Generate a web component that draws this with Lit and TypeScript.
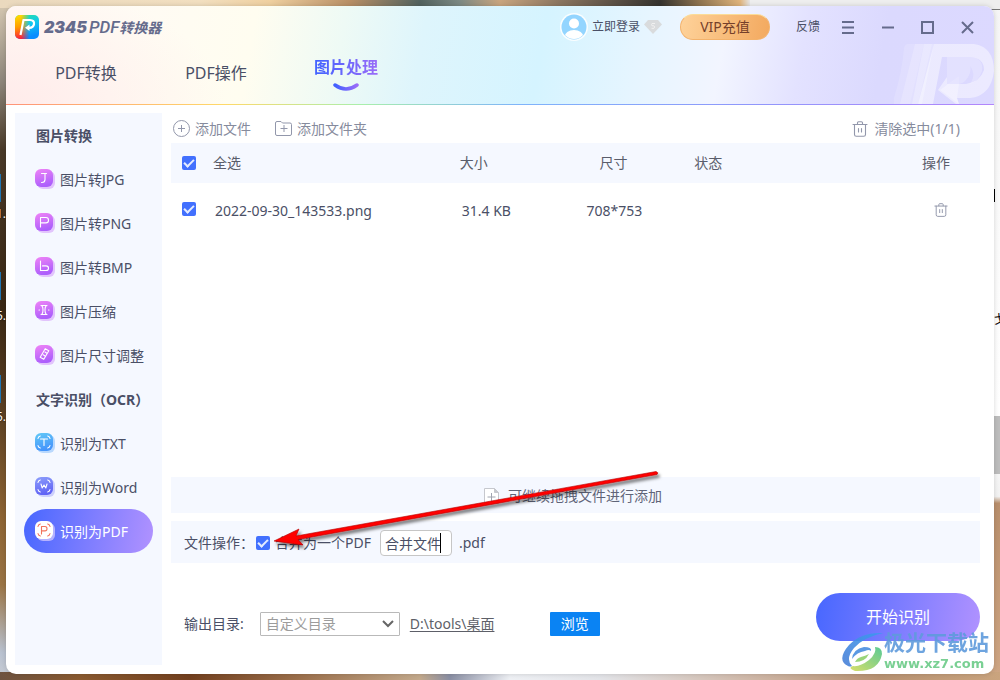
import { LitElement, html, css, svg } from "lit";
import { customElement, property, state } from "lit/decorators.js";
import { classMap } from "lit/directives/class-map.js";

type Glyph = "jpg" | "png" | "bmp" | "compress" | "resize" | "txt" | "word" | "pdf";

const glyphs: Record<Glyph, unknown> = {
  jpg: svg`<path d="M6.500 4.500h5M10 4.500v6q0 3-3 3h-.5"/>`,
  png: svg`<path d="M5.500 14V4.500h5.500q2.500 0 2.500 2.700t-2.500 2.700H5.500"/>`,
  bmp: svg`<path d="M5.500 4v9.500h5.500q2.500 0 2.500-2.300t-2.500-2.300H7.500"/>`,
  compress: svg`<path d="M6 4.500h6M6 13.500h6M7 5q1 1 1 4t-1 4M11 5q-1 1-1 4t1 4M4 9h.5M13.500 9h.5"/>`,
  resize: svg`<path d="M10.200 3.700l3.600 2.100-5 8.500-3.600-2.100zM10 7l1.500 1M8.200 9.800l1.500 1"/>`,
  txt: svg`<path d="M5.500 6h7M9 6v6.500"/>`,
  word: svg`<path d="M6 7l1.200 4L9 8l1.800 3L12 7"/>`,
  pdf: svg`<path d="M6.500 13V5.500h3.500q2 0 2 2.200t-2 2.200H6.500"/>`,
};

const corners = svg`<path d="M3 5.500q.3-2 2.300-2.500M12.700 3q2 .5 2.300 2.500M15 12.500q-.3 2-2.300 2.500M5.300 15q-2-.5-2.300-2.500"/>`;

@customElement("nav-icon")
class NavIcon extends LitElement {
  @property() name: Glyph = "jpg";

  static styles = css`
    :host { display: block; width: 20px; height: 20px; }
    svg { display: block; }
  `;

  render() {
    const tones: Record<string, string[]> = {
      txt: ["#62c9f7", "#4595fb", "#fff", "#b9d8fd"],
      word: ["#8d9ffb", "#6164f5", "#fff", "#cdd0fc"],
      pdf: ["#fff", "#fff", "#f2735c", "#b5b2ff"],
    };
    const [from, to, stroke, shade] = tones[this.name] ?? ["#f084f6", "#ad5ffc", "#fff", "#e2c4fc"];
    return html`<svg width="20" height="20" viewBox="0 0 20 20" fill="none" aria-hidden="true">
      <defs><linearGradient id="g" x1="0" y1="0" x2="0.3" y2="1">
        <stop stop-color=${from} /><stop offset="1" stop-color=${to} />
      </linearGradient></defs>
      <rect x="2" y="2" width="18" height="18" rx="6" fill=${shade} />
      <rect width="18" height="18" rx="6" fill="url(#g)" />
      <g stroke=${stroke} stroke-width="1.1" stroke-linecap="round" stroke-linejoin="round">
        ${glyphs[this.name]}
        ${this.name in tones ? corners : ""}
      </g>
    </svg>`;
  }
}

const trash = (size: number) => html`<svg width=${size} height=${size} viewBox="0 0 16 16" fill="none" stroke="#9297ab" stroke-width="1.1" stroke-linecap="round" aria-hidden="true">
  <path d="M1 3.500h14M5.500 3.200V1.800q0-1 1-1h3q1 0 1 1v1.400M2.500 3.500v10q0 1.800 1.800 1.800h7.400q1.800 0 1.800-1.800v-10M6.500 7.500v3.500M9.500 7.500v3.500"/>
</svg>`;

interface NavGroup {
  title: string;
  items: { icon: Glyph; label: string }[];
}

const groups: NavGroup[] = [
  {
    title: "图片转换",
    items: [
      { icon: "jpg", label: "图片转JPG" },
      { icon: "png", label: "图片转PNG" },
      { icon: "bmp", label: "图片转BMP" },
      { icon: "compress", label: "图片压缩" },
      { icon: "resize", label: "图片尺寸调整" },
    ],
  },
  {
    title: "文字识别（OCR）",
    items: [
      { icon: "txt", label: "识别为TXT" },
      { icon: "word", label: "识别为Word" },
      { icon: "pdf", label: "识别为PDF" },
    ],
  },
];

const tabs = ["PDF转换", "PDF操作", "图片处理"];
const files = [{ name: "2022-09-30_143533.png", size: "31.4 KB", dims: "708*753" }];

@customElement("app-root")
class AppRoot extends LitElement {
  @state() private tab = "图片处理";
  @state() private tool = "识别为PDF";

  static styles = css`
    :host {
      display: block;
      position: relative;
      box-sizing: border-box;
      min-height: 100vh;
      padding: 6px;
      overflow: hidden;
      font: 14px/20px "Noto Sans", "Noto Sans CJK SC", sans-serif;
      color: #4a4f66;
    }
    * { box-sizing: border-box; }
    button, input, select { font: inherit; color: inherit; margin: 0; }
    button { padding: 0; border: 0; background: none; cursor: pointer; }
    svg { display: block; flex: none; }

    .desktop {
      position: absolute;
      inset: 0;
      overflow: hidden;
      background:
        linear-gradient(90deg, #ead9be 0, #f2dfc0 20%, #efd0a0 27%, #b88f66 35%, #52625f 42%, #7d8a84 46%, #c9a57f 50%, #8a7560 56%, #35332f 66%, #8f7450 70%, #e0b47c 74%, #e5e5e5 75%) top / 100% 8px no-repeat,
        linear-gradient(90deg, #6e5340 0, #8a5a30 8%, #73401f 19%, #9c704c 30%, #c3a98c 42%, #8a8fa4 45%, #eef0f4 51%, #e3e4e8 60%, #cfb8a8 75%, #b89272 88%, #caa47e 100%) bottom / 100% 8px no-repeat,
        linear-gradient(180deg, #d9cbb4 0, #8d857a 12%, #4a3a28 22%, #3a2814 45%, #5a3f22 60%, #8d6433 76%, #9a7444 86%, #b9c2d0 96%, #c8ccd4 100%) left / 50% 100% no-repeat,
        linear-gradient(180deg, #f5f5f5 0, #fff 60%, #f2f2f2 73%, #b98f6c 74%, #cfa684 100%) right / 50% 100% no-repeat;
    }
    .shard { position: absolute; left: 0; width: 1px; height: 28px; background: #1f74b0; }
    .tag { position: absolute; right: 994px; color: #fff; font-size: 12px; line-height: 16px; text-shadow: 0 0 2px #000; white-space: nowrap; }
    .s1 { top: 174px; }
    .s2 { top: 272px; }
    .s3 { top: 375px; }
    .t1 { top: 206px; }
    .t2 { top: 308px; }
    .t3 { top: 409px; }
    .bar { position: absolute; right: 0; top: 0; width: 25%; height: 10px; background: #eee; border-bottom: 1px solid #777; }
    .panel { position: absolute; right: 0; top: 416px; width: 6px; height: 58px; background: #bdbdbd; }
    .stroke { position: absolute; right: 5px; top: 189px; width: 1px; height: 13px; background: #000; }
    .stray { position: absolute; left: 994px; top: 312px; color: #000; font-size: 12px; line-height: 16px; }

    .window {
      position: relative;
      display: flex;
      flex-direction: column;
      min-height: calc(100vh - 12px);
      border-radius: 10px;
      background: #fff;
      box-shadow: 0 0 5px rgba(0, 0, 0, 0.16);
    }

    .head {
      position: relative;
      border-radius: 10px 10px 0 0;
      background:
        linear-gradient(90deg, #ff9379, #ffd969 22%, #a9efac 36%, #7fb4fa 52%, #8f97fb 75%, #b286fb) bottom / 100% 1px no-repeat,
        radial-gradient(ellipse 220px 120px at 0 100%, rgba(255, 232, 232, 0.8), rgba(255, 240, 240, 0)),
        linear-gradient(100deg, #fff8f4 0, #fffbf4 12%, #fffdf0 25%, #eefaf5 34%, #def5fc 42%, #d5f4ff 54%, #e6f5ff 64%, #f2f5ff 72%, #e3e2ff 80%, #dbd9fe 88%, #dcd9ff 100%);
    }
    .ghost { position: absolute; right: 0; bottom: 1px; }
    .titlebar { position: relative; display: flex; align-items: center; height: 42px; padding: 0 20px 0 9px; font-size: 12px; }
    .brand { display: flex; align-items: center; gap: 5px; margin: 0; color: #656b8c; font-size: 16px; font-weight: 700; font-style: italic; }
    .digits { font-family: "Inter", sans-serif; font-weight: 900; font-size: 16px; }
    .latin { font-family: "Roboto", sans-serif; font-weight: 500; font-size: 17px; margin-left: 2px; }
    .cjk { font-size: 14px; }
    .actions { display: flex; align-items: center; margin-left: auto; }
    .login { display: flex; align-items: center; gap: 4px; font-size: 12px; }
    .vip {
      width: 90px; height: 26px; margin: 0 26px 0 18px;
      border: 1px solid #f3b26b; border-top-color: #fbdc98; border-radius: 13px;
      background: linear-gradient(100deg, #fed29a, #f3a95f);
      color: #75402a; font-size: 14px; line-height: 24px;
    }
    .controls { display: flex; gap: 27px; margin-left: 22px; }

    .tabs { display: flex; height: 57px; padding-left: 15px; }
    .tab { display: flex; flex-direction: column; align-items: center; width: 130px; padding-top: 13px; font-size: 16px; line-height: 24px; }
    .tab.on { padding-top: 7px; font-weight: 700; }
    .tab.on .word { background: linear-gradient(90deg, #3f62ff, #9a6cf8); -webkit-background-clip: text; background-clip: text; color: transparent; }
    .smile { margin-top: 4px; }

    .body { display: flex; flex: 1; gap: 9px; padding: 8px 14px 9px 9px; }
    .side { flex: none; width: 147px; padding: 0 9px; background: #f5f8ff; }
    .group { margin: 0; padding: 2px 0 0 12px; font-size: 14px; font-weight: 700; line-height: 42px; white-space: nowrap; }
    .item {
      display: flex; align-items: center; gap: 5px; width: 100%; height: 44px; padding: 0 0 0 11px;
      border-radius: 22px; text-align: left; white-space: nowrap;
    }
    .item-label { padding-top: 2px; }
    .item.on { background: linear-gradient(100deg, #4767ff, #b192ff); color: #fff; }

    .main { display: flex; flex: 1; flex-direction: column; min-width: 0; padding-bottom: 24px; }
    .tools { display: flex; gap: 24px; height: 30px; padding: 1px 20px 0 2px; color: #868b9d; }
    .tool { display: flex; align-items: center; gap: 5px; }
    .tool.clear { gap: 6px; margin-left: auto; }

    .list { flex: 1; }
    .files { width: 100%; border-collapse: collapse; table-layout: fixed; }
    .files th { height: 40px; padding: 0; background: #f5f8ff; font-weight: 400; text-align: left; color: #5a5d6b; }
    .files td { height: 56px; padding: 0 0 0 2px; }
    .files .c-check { width: 42px; padding-left: 11px; }
    .files td.c-check, .files td.end { padding-bottom: 4px; }
    .c-name { width: 30.5%; }
    .c-size { width: 9%; }
    .c-dims { width: 20%; }
    .c-status { width: 18%; }
    .files .mid { text-align: center; }
    .files .end { padding-right: 30px; text-align: right; }
    .files td.end { padding-right: 32px; }
    .row-action { display: inline-block; vertical-align: middle; }

    .tick { appearance: none; display: grid; place-items: center; flex: none; width: 14px; height: 14px; border-radius: 2px; background: #4270fe; }
    .tick:not(:checked) { background: #fff; border: 1px solid #b5b8c8; }
    .tick:checked::after { content: ""; width: 8px; height: 4px; margin-bottom: 3px; border: solid #e4ebff; border-width: 0 0 2px 2px; transform: rotate(-45deg); }

    .drop { display: flex; align-items: center; justify-content: center; gap: 9px; height: 36px; margin-bottom: 8px; padding: 2px 5px 0 0; background: #f5f8ff; color: #5f6478; }
    .ops { position: relative; display: flex; align-items: center; height: 42px; margin-bottom: 30px; padding: 2px 13px 0; background: #f5f8ff; }
    .ops .tick { margin: 0 5px 0 2px; }
    .field { position: relative; margin: 0 7px 0 9px; }
    .field-input { display: block; width: 72px; height: 26px; padding: 0 4px; border: 1px solid #c6c6c6; border-radius: 4px; background: #fff; outline: 0; }
    .caret { position: absolute; left: 60px; top: 3px; width: 1px; height: 20px; background: #000; }
    .arrow { position: absolute; left: 98px; top: -56px; pointer-events: none; }

    .foot { display: flex; align-items: center; height: 48px; padding-left: 13px; }
    .foot-row { display: flex; align-items: center; flex: 1; padding-top: 14px; }
    .picker { position: relative; margin: 0 10px 0 16px; }
    .picker-select { appearance: none; display: block; width: 140px; height: 24px; padding: 0 24px 0 5px; border: 1px solid #b9b9b9; border-radius: 1px; background: #fff; color: #9c9c9c; }
    .chev { position: absolute; right: 6px; top: 8px; pointer-events: none; }
    .path { width: 140px; color: #5d5f68; text-underline-offset: 2px; }
    .browse { width: 50px; height: 24px; border-radius: 1px; background: #0a83f3; color: #fff; }
    .start { width: 164px; height: 48px; border-radius: 24px; background: linear-gradient(100deg, #4767ff, #b192ff); color: #fff; font-size: 16px; }

    .mark { position: absolute; right: 5px; bottom: 0; display: flex; align-items: center; gap: 1px; pointer-events: none; opacity: 0.9; }
    .mark-name { display: block; color: #5f9bdc; font-size: 21px; font-weight: 700; line-height: 24px; }
    .mark-url { display: block; color: #6ccb88; font: 700 13px/20px "DejaVu Sans", sans-serif; }
  `;

  private logo() {
    return html`<svg width="24" height="24" viewBox="0 0 24 24" aria-hidden="true">
      <defs>
        <linearGradient id="la" x1="0" y1="0" x2="0.2" y2="1"><stop stop-color="#ffe000" /><stop offset=".5" stop-color="#ff9d00" /><stop offset="1" stop-color="#ff1b3c" /></linearGradient>
        <linearGradient id="lb" x1="0" y1="0" x2="0.3" y2="1"><stop stop-color="#2de39b" /><stop offset=".5" stop-color="#10c8ee" /><stop offset="1" stop-color="#0a8dff" /></linearGradient>
        <linearGradient id="lc" x1="0" y1="0" x2="1" y2="0"><stop offset=".25" stop-color="#fff" /><stop offset=".6" stop-color="#000" /></linearGradient>
        <mask id="lm"><rect width="24" height="24" fill="url(#lc)" /></mask>
      </defs>
      <rect width="24" height="24" rx="5" fill="url(#lb)" />
      <rect width="24" height="24" rx="5" fill="url(#la)" mask="url(#lm)" />
      <path d="M5.500 20L8.500 5H15Q19.500 5.200 19 9Q18.500 12.800 14 12.800" fill="none" stroke="#fff" stroke-width="2.200" />
      <path d="M10 12.800L14.500 9.500V16Z" fill="#fff" />
    </svg>`;
  }

  private ghost() {
    return html`<svg class="ghost" width="100" height="60" viewBox="0 0 100 60" fill="#fff" aria-hidden="true">
      <path opacity=".14" d="M14 0H30L16 60H-2Q8 30 10 4Q11 0 14 0z" />
      <path opacity=".2" d="M21 0H38L24 60H6z" />
      <path opacity=".26" d="M30 0H40L28 60H18z" />
      <path opacity=".45" fill-rule="evenodd" d="M40 0H80Q100 3 100 27Q97 52 76 54H63L65 60H62L44 46L53 33V40H72Q86 38 90 26Q90 14 76 13H48L39 60H24z" />
      <path opacity=".22" d="M53 13H66Q79 17 76 29Q72 39 65 40V32L53 41zM66 13H76Q90 14 88 27Q84 38 76 40Q86 26 66 13z" />
      <path opacity=".3" d="M65 32V40L63 54L65 60L46 46z" />
    </svg>`;
  }

  render() {
    return html`
      <div class="desktop" aria-hidden="true">
        <i class="bar"></i><i class="panel"></i><i class="stroke"></i>
        <i class="shard s1"></i><i class="shard s2"></i><i class="shard s3"></i>
        <span class="tag t1">1.</span><span class="tag t2">5.</span><span class="tag t3">5.</span>
        <span class="stray">戈</span>
      </div>
      <div class="window">
        <header class="head">
          ${this.ghost()}
          <div class="titlebar">
            <h1 class="brand">${this.logo()}<span><span class="digits">2345</span><span class="latin">PDF</span><span class="cjk">转换器</span></span></h1>
            <div class="actions">
              <button class="login">
                <svg width="28" height="28" viewBox="0 0 28 28" aria-hidden="true">
                  <defs><clipPath id="av"><circle cx="14" cy="14" r="12" /></clipPath></defs>
                  <circle cx="14" cy="14" r="14" fill="#fff" opacity=".85" />
                  <circle cx="14" cy="14" r="12.500" fill="#93d5ff" />
                  <g fill="#fff" clip-path="url(#av)"><circle cx="14" cy="10.500" r="5" /><ellipse cx="14" cy="24" rx="9.500" ry="7" /></g>
                </svg>
                <span>立即登录</span>
                <svg width="18" height="14" viewBox="0 0 18 14" aria-hidden="true">
                  <path d="M4 0h10l4 4.500L9 14 0 4.500z" fill="#d9dbdd" />
                  <path d="M11 3.500H8q-1 1.300 0 2.300h2q1.300 1.200 0 2.500h-2.500" fill="none" stroke="#f0f0f0" stroke-width="1" />
                </svg>
              </button>
              <button class="vip">VIP充值</button>
              <button>反馈</button>
              <div class="controls">
                <button aria-label="菜单"><svg width="13" height="13" viewBox="0 0 13 13" stroke="#656b8c" stroke-width="2"><path d="M0 1h12M0 6.500h12M0 12h12" /></svg></button>
                <button aria-label="最小化"><svg width="12" height="13" viewBox="0 0 12 13" stroke="#656b8c" stroke-width="2"><path d="M0 6.500h12" /></svg></button>
                <button aria-label="最大化"><svg width="13" height="13" viewBox="0 0 13 13" fill="none" stroke="#656b8c" stroke-width="2"><path d="M1 1h11v11H1z" /></svg></button>
                <button aria-label="关闭"><svg width="13" height="13" viewBox="0 0 13 13" stroke="#656b8c" stroke-width="2"><path d="M1 1l11 11M12 1L1 12" /></svg></button>
              </div>
            </div>
          </div>
          <nav class="tabs">
            ${tabs.map((t) => html`<button class=${classMap({ tab: true, on: t === this.tab })} @click=${() => (this.tab = t)}>
              <span class="word">${t}</span>
              ${t === this.tab
                ? html`<svg class="smile" width="28" height="9" viewBox="0 0 28 9" fill="none" aria-hidden="true">
                    <defs><linearGradient id="sm"><stop stop-color="#4060ff" /><stop offset="1" stop-color="#9a6cf8" /></linearGradient></defs>
                    <path d="M3 2q11 8 22 0" stroke="url(#sm)" stroke-width="3.500" stroke-linecap="round" /></svg>`
                : ""}
            </button>`)}
          </nav>
        </header>

        <div class="body">
          <aside class="side">
            ${groups.map((g) => html`
              <h2 class="group">${g.title}</h2>
              ${g.items.map((i) => html`<button class=${classMap({ item: true, on: i.label === this.tool })} @click=${() => (this.tool = i.label)}>
                <nav-icon name=${i.icon}></nav-icon><span class="item-label">${i.label}</span>
              </button>`)}
            `)}
          </aside>

          <main class="main">
            <div class="tools">
              <button class="tool">
                <svg width="17" height="17" viewBox="0 0 17 17" fill="none" stroke="#9297ab" aria-hidden="true"><circle cx="8.500" cy="8.500" r="8" /><path d="M5 8.500h7M8.500 5v7" /></svg>
                添加文件
              </button>
              <button class="tool">
                <svg width="17" height="15" viewBox="0 0 17 15" fill="none" stroke="#9297ab" aria-hidden="true"><path d="M.5 13V2Q.5.5 2 .5h4l1.500 1.500H15q1.500 0 1.500 1.500V13q0 1.500-1.500 1.500H2Q.5 14.500.5 13zM5.500 7.500h7M9 4v7" /></svg>
                添加文件夹
              </button>
              <button class="tool clear">${trash(16)} 清除选中(1/1)</button>
            </div>

            <div class="list">
              <table class="files">
                <thead><tr>
                  <th class="c-check"><input class="tick" type="checkbox" id="all" checked aria-label="全选" /></th>
                  <th class="c-name"><label for="all">全选</label></th>
                  <th class="c-size">大小</th>
                  <th class="c-dims mid">尺寸</th>
                  <th class="c-status">状态</th>
                  <th class="end">操作</th>
                </tr></thead>
                <tbody>
                  ${files.map((f) => html`<tr>
                    <td class="c-check"><input class="tick" type="checkbox" checked aria-label=${f.name} /></td>
                    <td>${f.name}</td>
                    <td>${f.size}</td>
                    <td class="mid">${f.dims}</td>
                    <td></td>
                    <td class="end"><button class="row-action" aria-label="删除">${trash(14)}</button></td>
                  </tr>`)}
                </tbody>
              </table>
            </div>

            <div class="drop">
              <svg width="15" height="16" viewBox="0 0 15 16" fill="none" stroke="#c6c8ce" aria-hidden="true"><path d="M.5.5h10l4 4v11H.5z" fill="#fff" /><path d="M10.500.5v4h4z" fill="#c6c8ce" /><path d="M3.500 9h8M7.500 5v8" stroke="#a0a4b0" /></svg>
              <span>可继续拖拽文件进行添加</span>
            </div>

            <div class="ops">
              <span>文件操作：</span>
              <input class="tick" type="checkbox" id="merge" checked />
              <label for="merge">合并为一个PDF</label>
              <span class="field"><input class="field-input" type="text" value="合并文件" aria-label="文件名" /><i class="caret"></i></span>
              <span>.pdf</span>
              <svg class="arrow" width="400" height="90" viewBox="0 0 400 90" aria-hidden="true">
                <defs><filter id="sh" x="-5%" y="-20%" width="110%" height="150%"><feDropShadow dx="2" dy="3" stdDeviation="1.800" flood-color="#000" flood-opacity=".5" /></filter></defs>
                <g filter="url(#sh)" fill="#fe0000" stroke="#b40000" stroke-width=".6">
                  <path d="M5 76L30 64L27 71L387 6.500Q390 7.500 388 9.500L29 74.500L34 80Z" />
                </g>
              </svg>
            </div>

            <div class="foot">
              <div class="foot-row">
                <label for="dir">输出目录:</label>
                <span class="picker">
                  <select class="picker-select" id="dir"><option>自定义目录</option></select>
                  <svg class="chev" width="12" height="8" viewBox="0 0 12 8" fill="none" stroke="#666" stroke-width="2" aria-hidden="true"><path d="M1 1l5 5 5-5" /></svg>
                </span>
                <span class="path"><a class="path" href="#">D:\\tools\\桌面</a></span>
                <button class="browse">浏览</button>
              </div>
              <button class="start">开始识别</button>
            </div>
          </main>
        </div>

        <div class="mark">
          <svg width="42" height="40" viewBox="0 0 42 40" aria-hidden="true">
            <defs>
              <linearGradient id="wb" x1="0" y1="1" x2="1" y2="0"><stop stop-color="#4a7fd6" /><stop offset="1" stop-color="#3b9cf0" /></linearGradient>
              <linearGradient id="wg" x1="0" y1="1" x2="1" y2="0"><stop stop-color="#d3dc5a" /><stop offset="1" stop-color="#48c48a" /></linearGradient>
            </defs>
            <path d="M42 1Q20 0 8 13Q-5 28 7 34Q9 35 11 34Q4 27 13 16Q23 5 42 1z" fill="url(#wb)" />
            <path d="M11 27Q12 17 23 15Q31 15 30 19Q28 17 24 19Q16 20 11 27z" fill="#4a8fe0" />
            <path d="M14 39Q38 40 41 22Q41 15 34 15Q36 21 28 28Q19 35 12 34Q6 36 14 39z" fill="url(#wg)" />
            <path d="M14 30Q24 30 28 22Q24 24 20 25Q16 26 14 30z" fill="#8fd06c" />
          </svg>
          <div><span class="mark-name">极光下载站</span><span class="mark-url">www.xz7.com</span></div>
        </div>
      </div>
    `;
  }
}
